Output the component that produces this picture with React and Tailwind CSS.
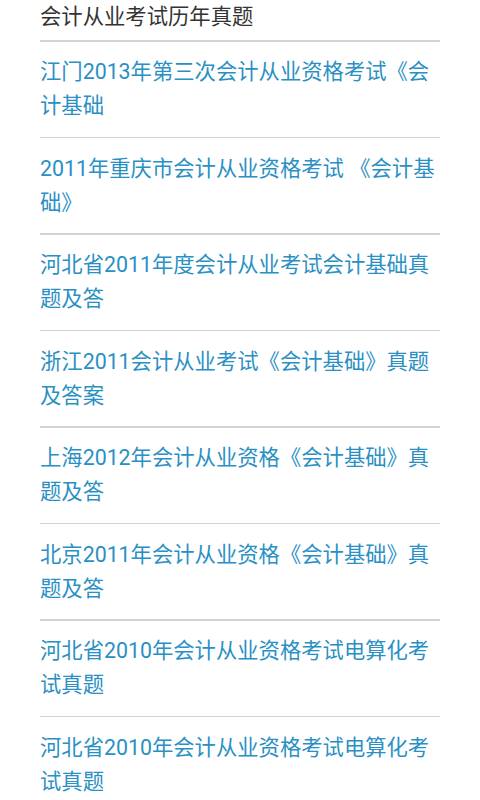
const items = [
  '江门2013年第三次会计从业资格考试《会计基础',
  '2011年重庆市会计从业资格考试 《会计基础》',
  '河北省2011年度会计从业考试会计基础真题及答',
  '浙江2011会计从业考试《会计基础》真题及答案',
  '上海2012年会计从业资格《会计基础》真题及答',
  '北京2011年会计从业资格《会计基础》真题及答',
  '河北省2010年会计从业资格考试电算化考试真题',
  '河北省2010年会计从业资格考试电算化考试真题',
]

export default function App() {
  return (
    <div
      className="w-[480px] h-[800px] overflow-hidden bg-white px-[40px]"
      style={{ fontFamily: 'Roboto, "Noto Sans CJK SC", sans-serif' }}
    >
      <div className="text-[21.33px] leading-[34px] text-[#333333] pb-[6px]">会计从业考试历年真题</div>
      {items.map((t, i) => (
        <div key={i}>
          <div className="h-[1.5px] bg-[#d2d2d2]" />
          <div className="py-[13.5px] text-[21.33px] leading-[34px] text-[#2a90c4]">{t}</div>
        </div>
      ))}
    </div>
  )
}
